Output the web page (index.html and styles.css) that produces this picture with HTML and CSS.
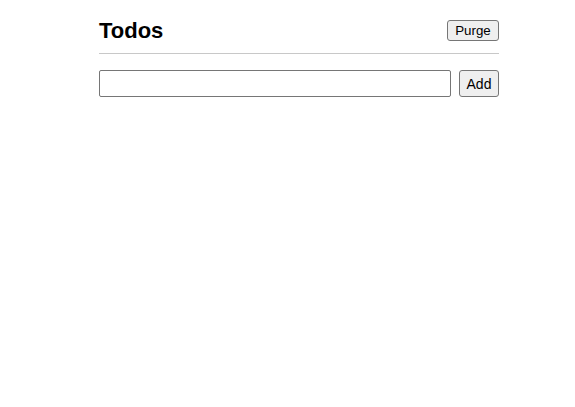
FILE: index.html
```html
<!DOCTYPE html>
<html>
<head>
<meta charset="utf-8">
<link rel="stylesheet" href="styles.css">
</head>
<body>
<div class="app">
  <header class="header">
    <h1 class="title">Todos</h1>
    <button class="btn purge">Purge</button>
  </header>
  <form class="add-form">
    <input class="todo-input" type="text">
    <button class="btn add" type="button">Add</button>
  </form>
</div>
</body>
</html>
```
FILE: styles.css
```css
html, body {
  margin: 0;
  padding: 0;
  background: #fff;
}
body {
  font-family: "Liberation Sans", Arial, sans-serif;
  color: #000;
}
.app {
  width: 400px;
  margin-left: 99px;
  padding-top: 16px;
}
.header {
  display: flex;
  justify-content: space-between;
  align-items: center;
  border-bottom: 1px solid #c8c8c8;
  padding-bottom: 8px;
}
.title {
  margin: 0;
  font-size: 22px;
  font-weight: 700;
  line-height: 29px;
}
.btn {
  font-family: "Liberation Sans", Arial, sans-serif;
  font-size: 13.33px;
  background: #efefef;
  border: 1px solid #767676;
  border-radius: 3px;
  color: #000;
  padding: 1px 7px;
  margin: 0;
}
.purge {
  height: 21px;
  width: 52px;
  padding: 0;
}
.add-form {
  display: flex;
  gap: 8px;
  margin-top: 16px;
}
.todo-input {
  flex: 1;
  height: 27px;
  box-sizing: border-box;
  border: 1px solid #767676;
  border-radius: 2px;
  margin: 0;
  padding: 1px 2px;
  font-size: 13.33px;
}
.add {
  height: 27px;
  width: 40px;
  padding: 0;
  font-size: 14px;
}
```
